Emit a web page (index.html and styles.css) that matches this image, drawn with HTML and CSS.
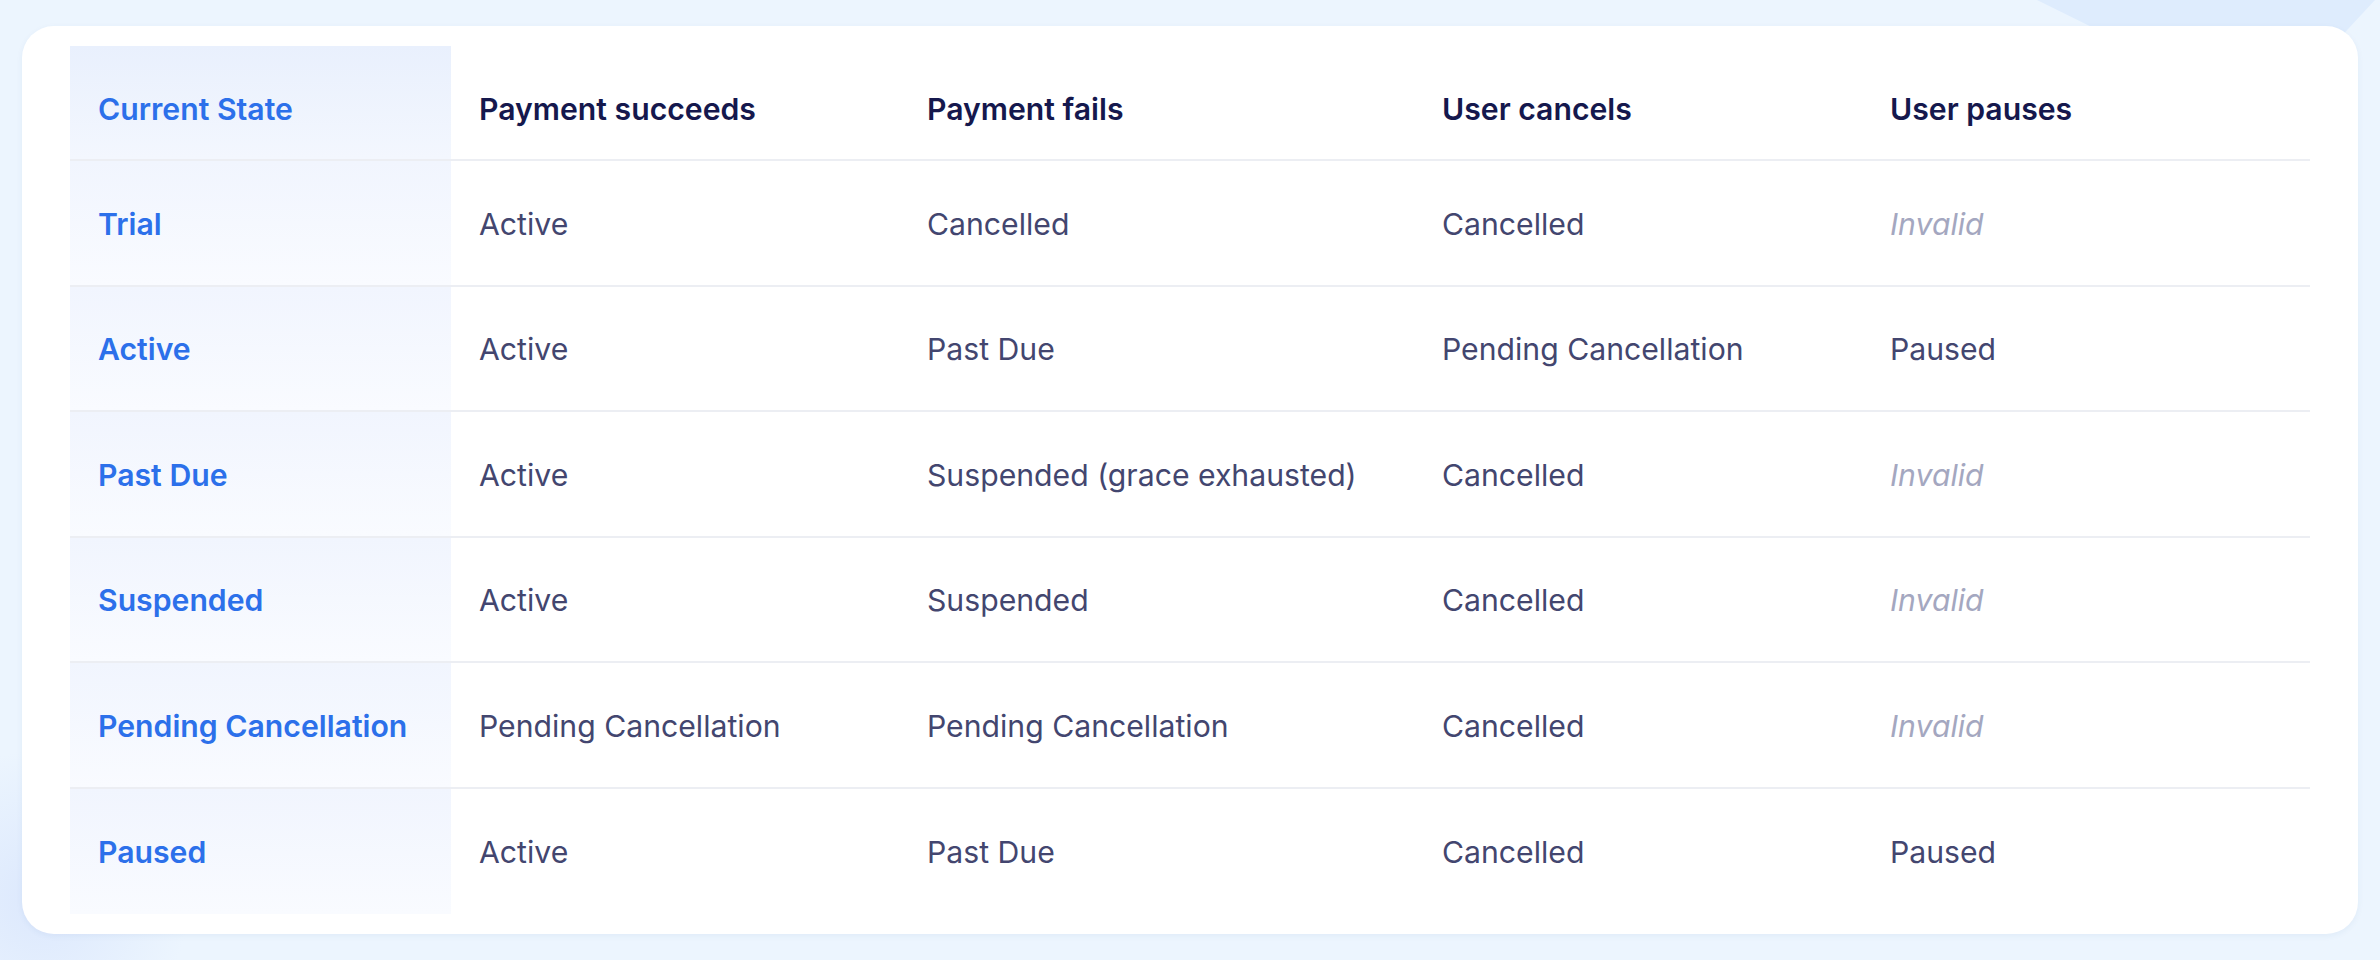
FILE: index.html
```html
<!DOCTYPE html>
<html lang="en">

<head>
    <meta charset="UTF-8">
    <meta name="viewport" content="width=device-width, initial-scale=1.0">
    <title>Subscription State Transitions</title>
    <link rel="stylesheet" href="styles.css">
</head>

<body>
    <div class="blob"></div>

    <div class="card">
        <table class="states">
            <colgroup>
                <col class="col-state">
                <col class="col-ok">
                <col class="col-fail">
                <col class="col-cancel">
                <col class="col-pause">
            </colgroup>
            <thead>
                <tr>
                    <th class="state">Current State</th>
                    <th>Payment succeeds</th>
                    <th>Payment fails</th>
                    <th>User cancels</th>
                    <th>User pauses</th>
                </tr>
            </thead>
            <tbody>
                <tr>
                    <td class="state">Trial</td>
                    <td>Active</td>
                    <td>Cancelled</td>
                    <td>Cancelled</td>
                    <td class="invalid">Invalid</td>
                </tr>
                <tr>
                    <td class="state">Active</td>
                    <td>Active</td>
                    <td>Past Due</td>
                    <td>Pending Cancellation</td>
                    <td>Paused</td>
                </tr>
                <tr>
                    <td class="state">Past Due</td>
                    <td>Active</td>
                    <td>Suspended (grace exhausted)</td>
                    <td>Cancelled</td>
                    <td class="invalid">Invalid</td>
                </tr>
                <tr>
                    <td class="state">Suspended</td>
                    <td>Active</td>
                    <td>Suspended</td>
                    <td>Cancelled</td>
                    <td class="invalid">Invalid</td>
                </tr>
                <tr>
                    <td class="state">Pending Cancellation</td>
                    <td>Pending Cancellation</td>
                    <td>Pending Cancellation</td>
                    <td>Cancelled</td>
                    <td class="invalid">Invalid</td>
                </tr>
                <tr>
                    <td class="state">Paused</td>
                    <td>Active</td>
                    <td>Past Due</td>
                    <td>Cancelled</td>
                    <td>Paused</td>
                </tr>
            </tbody>
        </table>
    </div>
</body>

</html>
```

FILE: styles.css
```css
html,
body {
    margin: 0;
    height: 100%;
}

body {
    background-color: #ecf5fe;
    background-image: radial-gradient(circle at 40px 900px, #dce8fd 0, rgba(220, 232, 253, 0) 150px);
    font-family: 'Inter', 'Noto Sans', sans-serif;
    padding: 26px 22px;
    box-sizing: border-box;
    position: relative;
    overflow: hidden;
}

/* decorative shape behind the top right corner */
.blob {
    position: absolute;
    top: 0;
    left: 2037px;
    width: 338px;
    height: 80px;
    background-color: #deecfd;
    clip-path: polygon(0 0, 100% 0, 78% 100%, 48% 100%);
}

.card {
    position: relative;
    background-color: #fff;
    border-radius: 32px;
    padding: 20px 48px;
    height: 100%;
    box-sizing: border-box;
    box-shadow: 0 2px 6px rgba(40, 80, 160, 0.06);
}

.states {
    width: 100%;
    table-layout: fixed;
    border-collapse: separate;
    border-spacing: 0;
    font-size: 30.2px;
    text-align: left;
}

.col-state {
    width: 381px;
}

.col-ok {
    width: 448px;
}

.col-fail {
    width: 515px;
}

.col-cancel {
    width: 448px;
}

.col-pause {
    width: 448px;
}

.states th,
.states td {
    padding: 2px 28px 0;
    border-bottom: 2px solid #eceef3;
    vertical-align: middle;
    white-space: nowrap;
}

.states th {
    height: 101px;
    padding-top: 12px;
    font-weight: 600;
    color: #15184d;
}

.states td {
    height: 121.5px;
    font-weight: 400;
    color: #43466f;
}

.states tbody tr:last-child td {
    border-bottom: none;
    height: 123.5px;
}

.states .state {
    color: #2c70ea;
    font-weight: 600;
    background: linear-gradient(180deg, #f1f5fe, #f9fbff);
}

.states th.state {
    background: linear-gradient(180deg, #e9f0fd, #f3f7fe);
}

.states .invalid {
    color: #a4a7c0;
    font-style: italic;
}
```
